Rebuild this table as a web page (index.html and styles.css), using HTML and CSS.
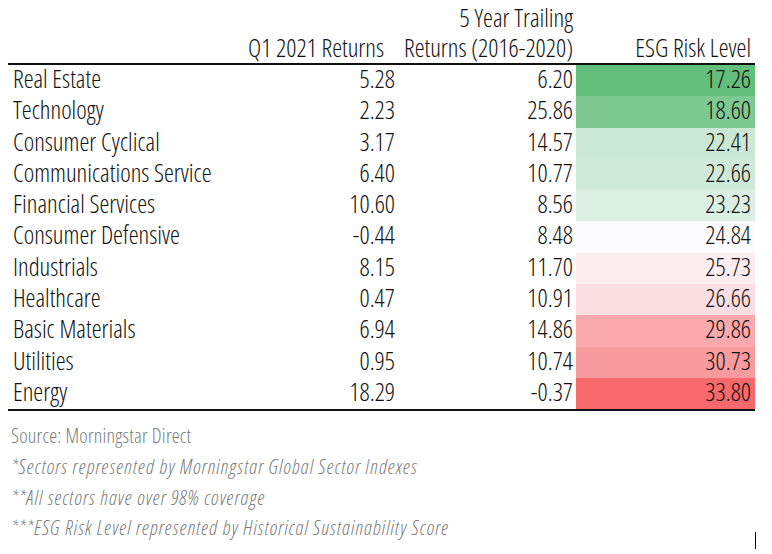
FILE: index.html
```html
<!DOCTYPE html>
<html lang="en">
<head>
<meta charset="utf-8">
<title>Sector Returns and ESG Risk</title>
<link rel="stylesheet" href="styles.css">
</head>
<body>
<div class="page">
  <div class="table">
    <div class="head">
      <div class="hc name"></div>
      <div class="hc q1"><span>Q1 2021 Returns</span></div>
      <div class="hc five"><span>5 Year Trailing</span><span>Returns (2016-2020)</span></div>
      <div class="hc esg"><span>ESG Risk Level</span></div>
    </div>
    <div class="body">
      <div class="row"><div class="c name">Real Estate</div><div class="c num">5.28</div><div class="c num">6.20</div><div class="c num esgv s1">17.26</div></div>
      <div class="row"><div class="c name">Technology</div><div class="c num">2.23</div><div class="c num">25.86</div><div class="c num esgv s2">18.60</div></div>
      <div class="row"><div class="c name">Consumer Cyclical</div><div class="c num">3.17</div><div class="c num">14.57</div><div class="c num esgv s3">22.41</div></div>
      <div class="row"><div class="c name">Communications Service</div><div class="c num">6.40</div><div class="c num">10.77</div><div class="c num esgv s4">22.66</div></div>
      <div class="row"><div class="c name">Financial Services</div><div class="c num">10.60</div><div class="c num">8.56</div><div class="c num esgv s5">23.23</div></div>
      <div class="row"><div class="c name">Consumer Defensive</div><div class="c num">-0.44</div><div class="c num">8.48</div><div class="c num esgv s6">24.84</div></div>
      <div class="row"><div class="c name">Industrials</div><div class="c num">8.15</div><div class="c num">11.70</div><div class="c num esgv s7">25.73</div></div>
      <div class="row"><div class="c name">Healthcare</div><div class="c num">0.47</div><div class="c num">10.91</div><div class="c num esgv s8">26.66</div></div>
      <div class="row"><div class="c name">Basic Materials</div><div class="c num">6.94</div><div class="c num">14.86</div><div class="c num esgv s9">29.86</div></div>
      <div class="row"><div class="c name">Utilities</div><div class="c num">0.95</div><div class="c num">10.74</div><div class="c num esgv s10">30.73</div></div>
      <div class="row"><div class="c name">Energy</div><div class="c num">18.29</div><div class="c num">-0.37</div><div class="c num esgv s11">33.80</div></div>
    </div>
  </div>
  <div class="notes">
    <p class="src">Source: Morningstar Direct</p>
    <p class="note">*Sectors represented by Morningstar Global Sector Indexes</p>
    <p class="note">**All sectors have over 98% coverage</p>
    <p class="note">***ESG Risk Level represented by Historical Sustainability Score</p>
  </div>
  <span class="caret"></span>
</div>
</body>
</html>
```
FILE: styles.css
```css
html, body {
  margin: 0;
  padding: 0;
  background: #ffffff;
}
.page {
  position: relative;
  width: 772px;
  height: 554px;
  padding-left: 8px;
  box-sizing: border-box;
  font-family: "Open Sans", "Liberation Sans", sans-serif;
  font-stretch: 75%;
  font-weight: 300;
  color: #111111;
}
.table {
  width: 747px;
}
.head, .row {
  display: grid;
  grid-template-columns: 252px 138px 178px 179px;
}
.head {
  height: 65px;
  box-sizing: border-box;
  padding-bottom: 1px;
  border-bottom: 2px solid #111;
  font-size: 25px;
  line-height: 30px;
}
.hc {
  display: flex;
  flex-direction: column;
  justify-content: flex-end;
  align-items: flex-end;
  white-space: nowrap;
}
.hc.q1 { padding-right: 14px; }
.hc.five { padding-right: 3px; }
.hc.esg { padding-right: 4px; }
.body {
  border-bottom: 2px solid #111;
}
.row {
  height: 31.3px;
  font-size: 25px;
  line-height: 27.5px;
}
.c {
  white-space: nowrap;
}
.c.name {
  padding-left: 5px;
}
.c.num {
  text-align: right;
  padding-right: 3px;
}
.c.esgv {
  padding-right: 4px;
}
.s1 { background: #63be7b; }
.s2 { background: #7ec992; }
.s3 { background: #cbe8d5; }
.s4 { background: #d0ead9; }
.s5 { background: #dcefe3; }
.s6 { background: #fcfcff; }
.s7 { background: #fcedf0; }
.s8 { background: #fbdee1; }
.s9 { background: #faaaac; }
.s10 { background: #f99b9e; }
.s11 { background: #f8696b; }
.notes {
  padding-top: 10px;
  padding-left: 3px;
}
.notes p {
  margin: 0;
  font-size: 20px;
  font-weight: 300;
  line-height: 30.7px;
  color: #7a7a7a;
  white-space: nowrap;
}
.notes .src {
  letter-spacing: 0.25px;
}
.notes .note {
  font-style: italic;
  letter-spacing: 1.05px;
}
.caret {
  position: absolute;
  left: 755px;
  top: 532px;
  width: 1px;
  height: 17px;
  background: #000;
}
```
